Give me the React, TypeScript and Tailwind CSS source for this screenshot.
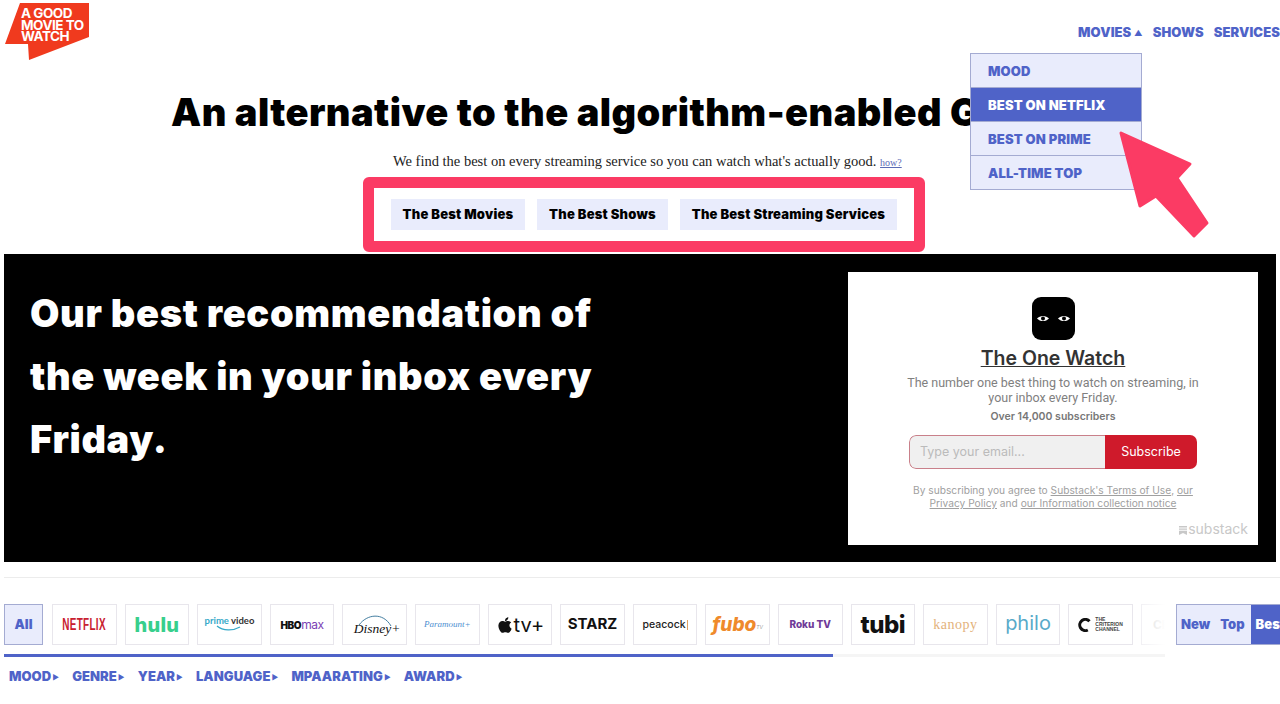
import { FaApple } from 'react-icons/fa'

const display = "font-['Inter',sans-serif] font-black"

function Logo() {
  return (
    <div className="relative w-[85px] h-[58px]">
      <svg width="85" height="58" viewBox="0 0 85 58" className="absolute left-0 top-0">
        <polygon points="15,0 84,0 84,34 24,57 23,41 0,41" fill="#f03a1e" />
      </svg>
      <div className="absolute left-[16px] top-[5px] text-white font-['Inter',sans-serif] font-bold text-[13.5px] leading-[11.5px] tracking-[-0.5px] whitespace-nowrap">
        <div>A GOOD</div>
        <div>MOVIE TO</div>
        <div>WATCH</div>
      </div>
    </div>
  )
}

function DropItem({ label, active, last }: { label: string; active?: boolean; last?: boolean }) {
  return (
    <div
      className={`h-[34px] flex items-center pl-[17px] pt-[2px] text-[13px] tracking-[0.15px] ${display} ${
        active ? 'bg-[#4f63c8] text-white' : 'text-[#4f63c8]'
      } ${last ? '' : 'border-b border-[#a4abd2]'}`}
    >
      {label}
    </div>
  )
}

function Netflix() {
  return <span className="font-['Liberation_Sans',sans-serif] font-bold text-[16px] text-[#c8202f] scale-x-[0.62] tracking-[0.5px]">NETFLIX</span>
}

function PrimeVideo() {
  return (
    <div className="relative flex flex-col items-center -mt-[3px]">
      <div className="text-[9.5px] leading-[11px] font-['Lato',sans-serif] font-bold whitespace-nowrap">
        <span className="text-[#36a9c9]">prime </span>
        <span className="text-[#333]">video</span>
      </div>
      <svg width="26" height="7" viewBox="0 0 26 7" className="-mt-[1px]">
        <path d="M1 1c6 5 16 5 23 1" fill="none" stroke="#36a9c9" strokeWidth="1.2" />
      </svg>
    </div>
  )
}

function Disney() {
  return (
    <div className="relative w-[44px] h-[30px]">
      <svg width="44" height="30" viewBox="0 0 44 30" className="absolute left-0 top-0">
        <path d="M6 15C14 4 30 2 38 16" fill="none" stroke="#2f6f95" strokeWidth="0.9" />
      </svg>
      <span className="absolute left-[1px] top-[9px] font-['Liberation_Serif',serif] italic text-[13.5px] text-[#111] whitespace-nowrap">Disney+</span>
    </div>
  )
}

function Criterion() {
  return (
    <div className="flex items-center gap-[3px]">
      <svg width="14" height="14" viewBox="0 0 14 14">
        <path d="M11.5 3.2A5.6 5.6 0 1 0 9.8 12" fill="none" stroke="#111" strokeWidth="3" />
      </svg>
      <div className="text-[5px] leading-[5px] font-['Liberation_Sans',sans-serif] text-[#444] font-bold">
        <div>THE</div>
        <div>CRITERION</div>
        <div>CHANNEL</div>
      </div>
    </div>
  )
}

const services = [
  <Netflix />,
  <span className="font-['Inter',sans-serif] font-extrabold text-[20px] tracking-[0.3px] text-[#37cf8c]">hulu</span>,
  <PrimeVideo />,
  <span className="text-[10px] font-['Inter',sans-serif] tracking-[-0.4px]"><b className="font-black text-[#111]">HBO</b><span className="text-[#7b3fb5] text-[12px]">max</span></span>,
  <Disney />,
  <span className="font-['Liberation_Serif',serif] italic text-[9px] text-[#4d8fd0] whitespace-nowrap">Paramount+</span>,
  <span className="flex items-center text-[#111] font-['Inter',sans-serif] text-[20px]"><FaApple size={18} /><span>tv+</span></span>,
  <span className="font-['Inter',sans-serif] font-bold text-[15px] text-[#111]">STARZ</span>,
  <span className="flex items-center gap-[1px] font-['Inter',sans-serif] font-medium text-[10.5px] text-[#222]">peacock<span className="w-[1px] h-[10px] bg-[#e0a060]" /></span>,
  <span className="font-['Inter',sans-serif] font-extrabold italic text-[19px] text-[#ef8a2c] leading-none">fubo<sup className="text-[5px] font-normal text-[#999]">TV</sup></span>,
  <span className="font-['Inter',sans-serif] font-extrabold text-[10px] text-[#6f3a98] whitespace-nowrap">Roku TV</span>,
  <span className="font-['Inter',sans-serif] font-extrabold text-[24px] tracking-[-0.5px] text-[#111]">tubi</span>,
  <span className="font-['Liberation_Serif',serif] text-[14px] tracking-[0.5px] text-[#e3b27b]">kanopy</span>,
  <span className="font-['Inter',sans-serif] text-[20px] leading-[20px] -mt-[3px] text-[#58aac9]">philo</span>,
  <Criterion />,
]

const filters = ['MOOD', 'GENRE', 'YEAR', 'LANGUAGE', 'MPAARATING', 'AWARD']

export default function App() {
  return (
    <div className="relative w-[1280px] h-[704px] overflow-hidden bg-white">
      <header className="h-[88px] flex justify-between items-start pl-[5px] pt-[3px]">
        <Logo />
        <nav className={`flex gap-[10px] pt-[20px] text-[13px] tracking-[0.1px] text-[#4f63c8] ${display}`}>
          <span>MOVIES <span className="text-[8px] align-[1px]">▲</span></span>
          <span>SHOWS</span>
          <span>SERVICES</span>
        </nav>
      </header>

      <h1 className={`h-[48px] pl-[171px] text-[38px] tracking-[0.45px] leading-[48px] text-black ${display}`}>
        An alternative to the algorithm-enabled G
      </h1>

      <p className="mt-[15px] pl-[393px] h-[20px] text-[14.5px] leading-[20px] text-[#222] font-['Liberation_Serif',serif]">
        We find the best on every streaming service so you can watch what's actually good.{' '}
        <a className="text-[10px] underline text-[#5a6bb5]">how?</a>
      </p>

      <div className="mt-[6px] ml-[363px] w-[562px] h-[75px] border-[11px] border-[#fb3b64] rounded-[6px] flex items-center pl-[17px] gap-[12px]">
        {[
          ['The Best Movies', 'w-[134px]'],
          ['The Best Shows', 'w-[131px]'],
          ['The Best Streaming Services', 'w-[217px]'],
        ].map(([label, width]) => (
          <div key={label} className={`${width} h-[31px] bg-[#e9ecfc] flex items-center justify-center text-[13px] tracking-[0.2px] text-black ${display}`}>
            {label}
          </div>
        ))}
      </div>

      <section className="mt-[2px] ml-[4px] w-[1272px] h-[308px] bg-black flex justify-between">
        <div className={`pl-[26px] pt-[28px] w-[600px] text-white text-[38px] tracking-[0.65px] leading-[63px] ${display}`}>
          Our best recommendation of the week in your inbox every Friday.
        </div>
        <div className="mt-[18px] mr-[18px] w-[410px] h-[273px] bg-white flex flex-col items-center font-['Inter',sans-serif]">
          <svg width="43" height="43" viewBox="0 0 43 43" className="mt-[25px]">
            <rect width="43" height="43" rx="9" fill="#000" />
            <path d="M5 21.5c3-3.4 9-3.4 12 0-3 3.4-9 3.4-12 0zM26 21.5c3-3.4 9-3.4 12 0-3 3.4-9 3.4-12 0z" fill="#fff" />
            <circle cx="11" cy="21.5" r="2" fill="#000" />
            <circle cx="32" cy="21.5" r="2" fill="#000" />
          </svg>
          <div className="mt-[5px] text-[19.5px] leading-[26px] font-semibold text-[#333] underline">The One Watch</div>
          <p className="mt-[4px] w-[300px] text-center font-['Roboto',sans-serif] text-[12.5px] leading-[15px] text-[#808080]">
            The number one best thing to watch on streaming, in your inbox every Friday.
          </p>
          <div className="mt-[4px] text-[10.5px] leading-[16px] font-semibold text-[#777]">Over 14,000 subscribers</div>
          <div className="mt-[10px] w-[288px] h-[34px] flex rounded-[7px] overflow-hidden">
            <div className="flex-1 bg-[#f0f0f0] border border-r-0 border-[#c9808a] rounded-l-[7px] pl-[10px] flex items-center text-[12.5px] text-[#bbb]">
              Type your email...
            </div>
            <div className="w-[92px] bg-[#cf1a2b] text-white text-[12.5px] flex items-center justify-center">Subscribe</div>
          </div>
          <p className="mt-[15px] w-[300px] text-center text-[10.2px] leading-[13px] text-[#a0a0a0]">
            By subscribing you agree to <span className="underline">Substack's Terms of Use</span>, <span className="underline">our Privacy Policy</span> and <span className="underline">our Information collection notice</span>
          </p>
          <div className="self-end mt-[10px] mr-[10px] flex items-center gap-[1px] text-[14px] leading-[18px] text-[#c8c8c8]">
            <svg width="8" height="9" viewBox="0 0 8 9" className="mt-[2px]">
              <path d="M0 0h8v1.4H0zM0 2.4h8v1.4H0zM0 4.8h8V9L4 7 0 9z" fill="#c8c8c8" />
            </svg>
            substack
          </div>
        </div>
      </section>

      <div className="mt-[15px] ml-[4px] h-px bg-[#ececec]" />

      <div className="mt-[26px] pl-[4px] h-[41px] flex">
        <div className="relative w-[1161px] h-[41px] overflow-hidden flex gap-[8px]">
          <div className={`shrink-0 w-[39px] h-[41px] mr-px bg-[#e9ecfc] border border-[#a4abd2] flex items-center justify-center text-[13px] text-[#4f63c8] ${display}`}>
            All
          </div>
          {services.map((logo, i) => (
            <div key={i} className="shrink-0 w-[64.6px] h-[41px] border border-[#e8e6ec] flex items-center justify-center overflow-hidden">
              {logo}
            </div>
          ))}
          <div className="shrink-0 w-[64.6px] h-[41px] border border-[#e8e6ec] flex items-center pl-[11px] font-['Inter',sans-serif] font-bold text-[12px] text-[#bbb]">
            CI
          </div>
          <div className="absolute right-0 top-0 w-[28px] h-[41px] bg-gradient-to-r from-white/30 to-white" />
        </div>
        <div className={`ml-[11px] w-[104px] h-[41px] bg-[#e9ecfc] border border-r-0 border-[#a4abd2] flex items-center overflow-hidden text-[13px] text-[#4f63c8] ${display}`}>
          <span className="ml-[4px]">New</span>
          <span className="ml-[10px]">Top</span>
          <span className="ml-[6px] pl-[5px] flex-1 h-full bg-[#4f63c8] text-white flex items-center">Best</span>
        </div>
      </div>

      <div className="mt-[9px] ml-[4px] w-[1161px] h-[3px] bg-[#f5f5f5]">
        <div className="w-[829px] h-full bg-[#4f63c8]" />
      </div>

      <div className={`mt-[10px] pl-[9px] flex gap-[13px] text-[13px] tracking-[0.05px] text-[#4f63c8] ${display}`}>
        {filters.map((f) => (
          <span key={f} className="whitespace-nowrap">
            {f}
            <span className="text-[7px] align-[1px] ml-[1px]">▶</span>
          </span>
        ))}
      </div>

      {/* open dropdown + pointer arrow sit over the page */}
      <div className="absolute left-[970px] top-[53px] w-[172px] h-[137px] bg-[#e9ecfc] border border-[#a4abd2]">
        <DropItem label="MOOD" />
        <DropItem label="BEST ON NETFLIX" active />
        <DropItem label="BEST ON PRIME" />
        <DropItem label="ALL-TIME TOP" last />
      </div>
      <svg width="100" height="115" viewBox="0 0 100 115" className="absolute left-[1115px] top-[127px]">
        <polygon
          points="6,6 75,37 62,51 92,96 79,109 41,69 25,79"
          fill="#fb3b64"
          stroke="#fb3b64"
          strokeWidth="3"
          strokeLinejoin="round"
        />
      </svg>
    </div>
  )
}
